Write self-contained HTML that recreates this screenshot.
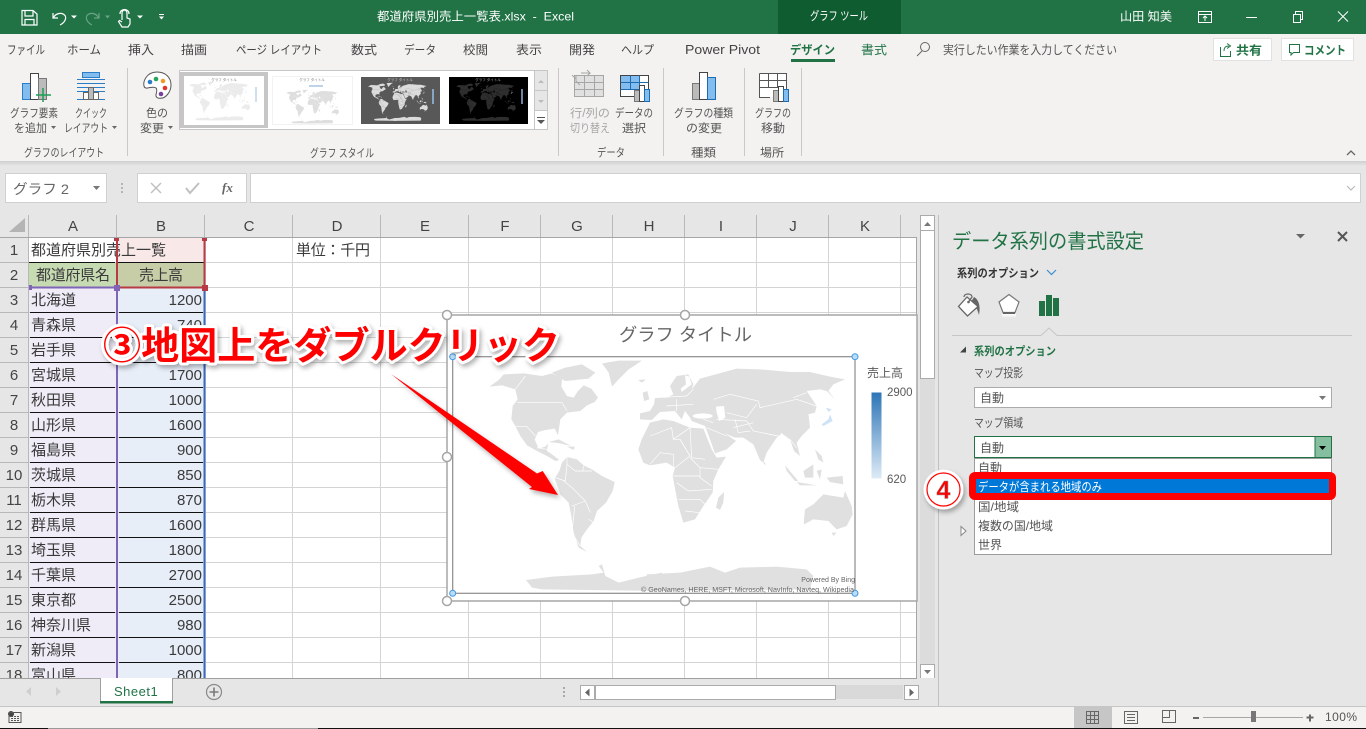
<!DOCTYPE html>
<html lang="ja"><head><meta charset="utf-8"><title>Excel</title>
<style>
html,body{margin:0;padding:0;background:#e6e6e6;width:1366px;height:729px;overflow:hidden}
svg{display:block;position:absolute;left:0;top:0}
text{font-family:"Liberation Sans","Noto Sans CJK JP",sans-serif;white-space:pre}
.u{font-size:12px;fill:#444}
.w{font-size:12px;fill:#fff}
.g{font-size:11.5px;fill:#555}
.c{font-size:15px;fill:#3a3a3a}
.h{font-size:15px;fill:#444;text-anchor:middle}
.p{font-size:12px;fill:#555}
.tt{font-size:3.5px;text-anchor:middle}
.sea{fill:var(--sea,#fff)}
.bl{fill:none;stroke:var(--sea,#fff);stroke-width:2}
</style></head><body>
<svg width="1366" height="729" viewBox="0 0 1366 729" xmlns="http://www.w3.org/2000/svg">
<defs>
<linearGradient id="lg" x1="0" y1="0" x2="0" y2="1"><stop offset="0" stop-color="#2e75b6"/><stop offset="1" stop-color="#deebf7"/></linearGradient>
<linearGradient id="sh" x1="0" y1="0" x2="0" y2="1"><stop offset="0" stop-color="#cfcfcf"/><stop offset="1" stop-color="#e6e6e6"/></linearGradient>
<linearGradient id="pb" x1="0" y1="0" x2="0" y2="1"><stop offset="0" stop-color="#fff"/><stop offset="1" stop-color="#e6e6e6"/></linearGradient>
<filter id="ds" x="-10%" y="-20%" width="125%" height="150%"><feDropShadow dx="2" dy="3" stdDeviation="2.5" flood-color="#000" flood-opacity=".3"/></filter>
<clipPath id="gridclip"><rect x="0" y="215" width="917" height="463"/></clipPath>
<g id="map">
<g transform="translate(36,138)">
<path d="M112,92L140,72L155,55L215,52L270,60L300,52L330,70L328,92L345,120L365,125L378,105L395,88L418,98L438,125L428,138L405,148L385,165L345,170L325,190L318,238L308,218L280,222L258,228L248,250L260,278L280,272L288,262L285,285L300,295L322,312L310,315L285,300L255,285L225,268L205,240L190,210L178,190L182,150L197,130L190,100L150,88Z"/>
<path d="M300,50L340,35L390,25L430,50L410,68L370,72L340,75L320,65Z"/>
<path d="M450,22L500,14L570,14L530,40L500,70L480,92L470,50Z"/>
<path d="M558,72L582,70L570,80Z"/>
<path d="M290,258L320,250L358,270L325,262Z"/>
<path d="M345,272L368,272L365,282Z"/>
<path d="M308,368L322,345L330,320L345,303L375,310L395,328L420,340L450,360L488,378L482,405L462,440L435,465L425,495L405,520L388,545L385,570L405,588L380,575L365,530L358,480L350,440L325,415Z"/>
<path d="M222,672L300,662L420,655L455,650L440,630L450,625L460,660L500,680L560,665L630,650L630,705L270,700L240,695Z"/>
<g class="bl"><path d="M195,140L330,140L345,165"/><path d="M190,212L225,212L250,240"/><path d="M190,100L220,60"/><path d="M255,275L285,280"/><path d="M345,303L345,325L370,345L395,345"/><path d="M335,375L360,395L400,435L415,470"/><path d="M360,450L400,435"/><path d="M310,365L340,375L345,325"/><path d="M395,330L392,345L420,345"/><path d="M368,450L360,530L385,570"/><path d="M410,490L425,500"/></g>
</g>
<g transform="translate(630,138)">
<path d="M-35,280L-25,250L0,200L40,190L70,195L120,215L160,218L185,280L200,305L228,302L205,340L190,375L188,410L160,450L135,490L100,500L85,450L68,360L75,335L50,320L0,328L-20,320Z"/>
<path d="M-30,172L0,165L12,145L15,125L50,125L70,115L60,90L80,60L115,55L130,85L125,100L150,68L260,38L330,40L420,48L480,48L540,62L585,70L550,85L535,105L555,130L530,105L510,100L470,105L500,150L495,170L475,175L478,195L480,215L455,240L440,260L450,300L432,285L420,250L395,232L380,245L350,290L340,320L330,312L310,265L280,245L255,245L225,232L258,255L230,280L195,292L170,222L165,210L125,195L120,185L105,165L95,190L75,165L30,168L5,192L-30,190Z"/>
<ellipse class="sea" cx="158" cy="180" rx="30" ry="8"/>
<path class="sea" d="M198,152L222,150L226,185L208,195L200,170Z"/>
<path class="sea" d="M105,58L118,62L125,85L95,108L92,98L108,85Z"/>
<path d="M-22,110L-8,105L-2,130L-18,135Z"/>
<path d="M198,455L205,425L222,408L220,440L210,462Z"/>
<path d="M462,490L465,460L490,445L520,415L550,420L580,425L585,405L605,450L608,475L590,510L560,520L535,495L490,490L462,505Z"/>
<path d="M545,530L560,530L550,540Z"/>
<path d="M405,328L445,375L435,375L410,345Z"/>
<path d="M440,378L500,388L450,388Z"/>
<path d="M460,345L490,325L490,365L465,365Z"/>
<path d="M500,345L515,340L510,370Z"/>
<path d="M530,365L578,360L580,385L540,378Z"/>
<path d="M495,280L515,300L520,320L505,310Z"/>
<path d="M340,315L348,325L342,325Z"/>
<path d="M-10,655L90,650L180,632L225,650L270,635L380,632L470,640L490,660L480,700L-10,705Z"/>
<path d="M528,155L545,160L535,168Z" style="fill:#cfe2f6"/>
<path d="M540,175L548,195L520,210L515,205L535,190Z" style="fill:#cfe2f6"/>
<g class="bl"><path d="M0,240L65,215L70,250L120,215"/><path d="M70,250L90,250L120,300"/><path d="M120,215L125,305L165,310"/><path d="M0,325L30,290L70,295L70,335"/><path d="M90,250L120,300L75,335"/><path d="M120,305L150,335L205,340"/><path d="M150,335L150,365L185,390"/><path d="M70,360L150,360"/><path d="M80,380L115,405L185,400"/><path d="M85,430L150,430L165,445"/><path d="M105,465L150,470"/><path d="M190,130L240,115L325,135L330,155L440,130L500,150"/><path d="M230,170L290,185L320,145"/><path d="M200,190L290,195L310,225L385,240"/><path d="M255,190L265,230L300,225"/><path d="M250,215L310,200"/><path d="M170,215L230,240"/><path d="M160,190L190,200"/><path d="M15,125L110,120L130,100"/><path d="M50,150L130,145"/><path d="M80,130L80,165"/><path d="M430,125L470,110"/><path d="M420,250L440,275"/><path d="M395,230L410,280"/></g>
</g>
</g>
</defs>

<!-- title bar -->
<rect width="1366" height="34" fill="#217346"/>
<rect x="778" width="123" height="34" fill="#0f5c30"/>
<g fill="none" stroke="#fff" stroke-width="1.2">
<path d="M22,10.500H33L37,14V25H22Z"/><path d="M25,10.500V16H33V10.500M25,25V19.500H34V25"/>
<path d="M53,13V18H58M53.500,17.500C56,13 62,12 65,15.500C67,19 64,23 60,25"/>
</g>
<path d="M71,15.500h6l-3,3z" fill="#fff"/>
<g fill="none" stroke="#6aa386" stroke-width="1.2"><path d="M99,13V18H94M98.500,17.500C96,13 90,12 87,15.500C85,19 88,23 92,25"/></g>
<path d="M105,15.500h5l-2.500,3z" fill="#6aa386"/>
<g fill="none" stroke="#fff" stroke-width="1.2"><path d="M122,20V13.500C122,9 127,9 127,13.500V18L130,19V24L128,27H122L118.500,21.500L119.500,20.500L122,22"/><path d="M120,14C120,8 129,8 129,14"/></g>
<path d="M137,15.500h6l-3,3z" fill="#fff"/>
<path d="M159,14h5v1h-5zM159,16.500h5l-2.500,3z" fill="#fff"/>
<text class="w" x="377" y="20.500" textLength="197" lengthAdjust="spacingAndGlyphs">都道府県別売上一覧表.xlsx  -  Excel</text>
<text class="w" x="810" y="20" textLength="58" lengthAdjust="spacingAndGlyphs">グラフ ツール</text>
<text class="w" x="1120" y="20.500" textLength="52" lengthAdjust="spacingAndGlyphs">山田 知美</text>
<g fill="none" stroke="#fff" stroke-width="1"><path d="M1198.500,11.500H1211.500V22.500H1198.500ZM1198.500,14.500H1211.500M1205,21V16.500M1203,18L1205,16L1207,18"/><path d="M1246,17.500H1257"/><path d="M1293.500,14.500H1300.500V22.500H1293.500ZM1295.500,14.500V11.500H1302.500V19.500H1300.500"/><path d="M1338,11.500L1348,21.500M1348,11.500L1338,21.500"/></g>

<!-- tabs / ribbon -->
<rect y="34" width="1366" height="127" fill="#f3f2f1"/>
<rect y="161" width="1366" height="5" fill="url(#sh)"/>
<text class="u" x="7" y="54" textLength="38" lengthAdjust="spacingAndGlyphs">ファイル</text>
<text class="u" x="67" y="54" textLength="34" lengthAdjust="spacingAndGlyphs">ホーム</text>
<text class="u" x="128" y="54" textLength="26" lengthAdjust="spacingAndGlyphs">挿入</text>
<text class="u" x="181" y="54" textLength="26" lengthAdjust="spacingAndGlyphs">描画</text>
<text class="u" x="236" y="54" textLength="86" lengthAdjust="spacingAndGlyphs">ページ レイアウト</text>
<text class="u" x="351" y="54" textLength="26" lengthAdjust="spacingAndGlyphs">数式</text>
<text class="u" x="404" y="54" textLength="32" lengthAdjust="spacingAndGlyphs">データ</text>
<text class="u" x="463" y="54" textLength="25" lengthAdjust="spacingAndGlyphs">校閲</text>
<text class="u" x="516" y="54" textLength="26" lengthAdjust="spacingAndGlyphs">表示</text>
<text class="u" x="569" y="54" textLength="26" lengthAdjust="spacingAndGlyphs">開発</text>
<text class="u" x="621" y="54" textLength="33" lengthAdjust="spacingAndGlyphs">ヘルプ</text>
<text class="u" x="685" y="54" textLength="75" lengthAdjust="spacingAndGlyphs" style="font-size:13px">Power Pivot</text>
<text class="u" x="790" y="54" textLength="45" lengthAdjust="spacingAndGlyphs" style="fill:#217346;font-weight:700">デザイン</text>
<rect x="791" y="59" width="44" height="3" fill="#217346"/>
<text class="u" x="861" y="54" textLength="26" lengthAdjust="spacingAndGlyphs" style="fill:#217346">書式</text>
<g fill="none" stroke="#666" stroke-width="1"><circle cx="925" cy="47" r="4.500"/><path d="M922,51L917,56"/></g>
<text class="u" x="943" y="54" textLength="174" lengthAdjust="spacingAndGlyphs" style="fill:#555">実行したい作業を入力してください</text>
<rect x="1213.500" y="38.500" width="58" height="22" fill="#fff" stroke="#e1e1e1"/>
<g fill="none" stroke="#217346"><path d="M1220.500,47V56.500H1230.500V51"/><path d="M1224,51C1224,47 1226,46 1229,46M1227,43.500L1230.500,46L1227,48.500"/></g>
<text class="u" x="1236" y="54.500" textLength="26" lengthAdjust="spacingAndGlyphs" style="fill:#217346;font-weight:700">共有</text>
<rect x="1281.500" y="38.500" width="72" height="22" fill="#fff" stroke="#e1e1e1"/>
<path d="M1289.500,44.500H1299.500V52.500H1293.500L1291,55V52.500H1289.500Z" fill="none" stroke="#217346"/>
<text class="u" x="1304" y="54.500" textLength="42" lengthAdjust="spacingAndGlyphs" style="fill:#217346;font-weight:700">コメント</text>

<!-- group separators -->
<g fill="#c8c8c8"><rect x="127" y="68" width="1" height="88"/><rect x="558" y="68" width="1" height="88"/><rect x="663" y="68" width="1" height="88"/><rect x="744" y="68" width="1" height="88"/><rect x="801" y="68" width="1" height="88"/></g>

<!-- chart element icon -->
<rect x="22.500" y="83.500" width="8" height="16" fill="#83bdef" stroke="#2a7dc6"/>
<rect x="30.500" y="73.500" width="8" height="26" fill="#fff" stroke="#444"/>
<rect x="38.500" y="78.500" width="8" height="21" fill="#bbb" stroke="#777"/>
<path d="M43,88V102M36,95H51" stroke="#1e9e55" stroke-width="1.500"/>
<text class="g" x="10" y="117" textLength="48" lengthAdjust="spacingAndGlyphs" >グラフ要素</text>
<text class="g" x="14" y="132" textLength="33" lengthAdjust="spacingAndGlyphs">を追加</text>
<path d="M51,126h5l-2.500,3z" fill="#666"/>
<!-- quick layout -->
<rect x="82.500" y="72.500" width="17" height="5" fill="#83bdef" stroke="#2a7dc6"/>
<path d="M77,79.500H105M77,83.500H105M77,87.500H105M77,99.500H105M77,91.500H105" stroke="#2a7dc6" fill="none"/>
<rect x="88.500" y="87.500" width="5" height="12" fill="#bbb" stroke="#666"/><rect x="83.500" y="92.500" width="5" height="7" fill="#fff" stroke="#666"/><rect x="93.500" y="92.500" width="5" height="7" fill="#fff" stroke="#666"/>
<text class="g" x="75" y="117" textLength="32" lengthAdjust="spacingAndGlyphs">クイック</text>
<text class="g" x="64" y="132" textLength="44" lengthAdjust="spacingAndGlyphs">レイアウト</text>
<path d="M112,126h5l-2.500,3z" fill="#666"/>
<!-- palette -->
<path d="M157,72C146,72 143,82 144,86C145,91 152,85 156,88C159,91 153,96 158,98C166,100 171,91 171,85C171,77 165,72 157,72Z" fill="#fff" stroke="#555"/>
<circle cx="150" cy="82" r="2.300" fill="#2a7dc6"/><circle cx="156" cy="79" r="2.300" fill="#2aa35a"/><circle cx="163" cy="81" r="2.300" fill="#f09a2c"/><circle cx="165" cy="88" r="2.300" fill="#e0362c"/><circle cx="161" cy="94" r="2.300" fill="#7a3fa0"/>
<text class="g" x="146" y="117" textLength="22" lengthAdjust="spacingAndGlyphs">色の</text>
<text class="g" x="140" y="132" textLength="24" lengthAdjust="spacingAndGlyphs">変更</text>
<path d="M168,126h5l-2.500,3z" fill="#666"/>
<text class="g" x="24" y="156.500" textLength="80" lengthAdjust="spacingAndGlyphs">グラフのレイアウト</text>
<text class="g" x="310" y="157" textLength="64" lengthAdjust="spacingAndGlyphs">グラフ スタイル</text>

<!-- gallery -->
<rect x="179.500" y="70.500" width="368" height="59" fill="#fff" stroke="#c6c6c6"/>
<rect x="180" y="72" width="88" height="56" fill="#c6c6c6"/>
<rect x="184" y="76" width="80" height="49" fill="#fff"/>
<g transform="translate(180.600,73.300) scale(.056)" fill="#ebebeb"><use href="#map"/></g>
<text class="tt" x="224" y="81" fill="#777">グラフ タイトル</text>
<rect x="255" y="87" width="2" height="15" fill="#cfe0f0"/>
<rect x="272.500" y="76.500" width="80" height="48" fill="#fff" stroke="#f2f2f2"/>
<g transform="translate(278.700,82.500) scale(.0486)" fill="#dedede"><use href="#map"/></g>
<text class="tt" x="312" y="81" fill="#777">グラフ タイトル</text>
<rect x="309" y="85" width="14" height="2" fill="#bcd3ea"/>
<rect x="361" y="77" width="79" height="47" fill="#585858"/>
<g transform="translate(359.700,74.500) scale(.055)" fill="#dcdcdc" style="--sea:#585858"><use href="#map"/></g>
<text class="tt" x="400" y="81" fill="#ccc">グラフ タイトル</text>
<rect x="432" y="89" width="2" height="15" fill="#88a5c4"/>
<rect x="449" y="77" width="79" height="47" fill="#000"/>
<g transform="translate(447.700,74.500) scale(.055)" fill="#2e2e2e" style="--sea:#000"><use href="#map"/></g>
<text class="tt" x="488" y="81" fill="#aaa">グラフ タイトル</text>
<rect x="521" y="89" width="2" height="15" fill="#6c86a2"/>
<g fill="#e6e6e6" stroke="#c6c6c6"><rect x="534.500" y="70.500" width="13" height="20"/><rect x="534.500" y="90.500" width="13" height="20"/></g>
<rect x="534.500" y="110.500" width="13" height="19" fill="#fff" stroke="#c6c6c6"/>
<path d="M538,83l3-3 3,3zM538,100l3,3 3-3z" fill="#bbb"/>
<path d="M537,117h8v1h-8zM537,120h8l-4,4z" fill="#555"/>

<!-- data group icons -->
<g fill="#c8c8c8" stroke="#a6a6a6"><rect x="574.500" y="75.500" width="29" height="21" fill="#e0e0e0"/><path d="M574.500,89.500H603.500M584.500,75.500V96.500M594.500,75.500V96.500M574.500,82.500H603.500" fill="none"/></g>
<path d="M576,76V81L580,85M576,79L572,75M581,73H590L587,70M590,73L587,76" fill="none" stroke="#a6a6a6"/>
<text class="g" x="570" y="117" textLength="40" lengthAdjust="spacingAndGlyphs" style="fill:#a6a6a6">行/列の</text>
<text class="g" x="570" y="132" textLength="40" lengthAdjust="spacingAndGlyphs" style="fill:#a6a6a6">切り替え</text>
<rect x="620.500" y="75.500" width="28" height="21" fill="#fff" stroke="#444"/>
<rect x="621" y="76" width="18" height="13" fill="#83bdef"/>
<path d="M620.500,82.500H648.500M620.500,89.500H640M630.500,75.500V89M639.500,75.500V89" stroke="#1e6cb0" fill="none"/>
<rect x="634.500" y="90.500" width="5" height="11" fill="#bbb" stroke="#777"/><rect x="639.500" y="85.500" width="5" height="16" fill="#fff" stroke="#444"/><rect x="644.500" y="89.500" width="5" height="12" fill="#83bdef" stroke="#1e6cb0"/>
<text class="g" x="615" y="117" textLength="38" lengthAdjust="spacingAndGlyphs">データの</text>
<text class="g" x="622" y="132" textLength="24" lengthAdjust="spacingAndGlyphs">選択</text>
<text class="g" x="597" y="156.500" textLength="28" lengthAdjust="spacingAndGlyphs">データ</text>
<!-- chart type -->
<rect x="692.500" y="83.500" width="7" height="16" fill="#bbb" stroke="#777"/><rect x="699.500" y="72.500" width="8" height="27" fill="#fff" stroke="#444"/><rect x="707.500" y="77.500" width="8" height="22" fill="#83bdef" stroke="#1e6cb0"/>
<text class="g" x="674" y="117" textLength="59" lengthAdjust="spacingAndGlyphs">グラフの種類</text>
<text class="g" x="686" y="132" textLength="36" lengthAdjust="spacingAndGlyphs">の変更</text>
<text class="g" x="691" y="156.500" textLength="25" lengthAdjust="spacingAndGlyphs">種類</text>
<!-- move chart -->
<rect x="760" y="74" width="26" height="23" fill="#fff"/>
<path d="M759.500,73.500H786.500V90M759.500,73.500V97.500H770M759.500,80.500H786.500M759.500,87.500H780M768.500,73.500V88M777.500,73.500V88" fill="none" stroke="#555"/>
<rect x="773.500" y="90.500" width="5" height="11" fill="#bbb" stroke="#777"/><rect x="778.500" y="86.500" width="5" height="15" fill="#fff" stroke="#444"/><rect x="783.500" y="89.500" width="5" height="12" fill="#83bdef" stroke="#1e6cb0"/>
<text class="g" x="755" y="117" textLength="36" lengthAdjust="spacingAndGlyphs">グラフの</text>
<text class="g" x="761" y="132" textLength="24" lengthAdjust="spacingAndGlyphs">移動</text>
<text class="g" x="760" y="156.500" textLength="24" lengthAdjust="spacingAndGlyphs">場所</text>
<path d="M1347,155l4-4 4,4" fill="none" stroke="#666" stroke-width="1.300"/>

<!-- formula bar -->
<rect x="5.500" y="173.500" width="101" height="29" fill="#fff" stroke="#d0d0d0"/>
<text x="13" y="194" style="font-size:14px;fill:#666" textLength="56" lengthAdjust="spacingAndGlyphs">グラフ 2</text>
<path d="M93,186h7l-3.500,4z" fill="#777"/>
<g fill="#b5b5b5"><rect x="121" y="183" width="2" height="2"/><rect x="121" y="187" width="2" height="2"/><rect x="121" y="191" width="2" height="2"/></g>
<rect x="137.500" y="173.500" width="109" height="29" fill="#fff" stroke="#d0d0d0"/>
<path d="M151,183L161,193M161,183L151,193" stroke="#c0c0c0" stroke-width="1.500" fill="none"/>
<path d="M186,188L190,193L199,183" stroke="#c0c0c0" stroke-width="2" fill="none"/>
<text x="222" y="192" style="font-size:13px;fill:#666;font-style:italic;font-weight:700;font-family:'Liberation Serif',serif">fx</text>
<rect x="250.500" y="173.500" width="1110" height="29" fill="#fff" stroke="#d0d0d0"/>
<path d="M1347,186l4,4 4-4" fill="none" stroke="#bbb" stroke-width="1.200"/>

<!-- grid -->
<g clip-path="url(#gridclip)">
<rect x="0" y="215" width="917" height="22" fill="#e6e6e6"/>
<rect x="0" y="237" width="29" height="441" fill="#e6e6e6"/>
<rect x="29" y="237" width="888" height="441" fill="#fff"/>
<path d="M25,232V218L9,232Z" fill="#b4b4b4"/>
<!-- cell fills -->
<rect x="118" y="238" width="86" height="24" fill="#f8e9e8"/>
<rect x="29" y="263" width="87" height="24" fill="#c7dbb3"/>
<rect x="118" y="263" width="86" height="24" fill="#c6cda7"/>
<rect x="29" y="288" width="87" height="390" fill="#efecf7"/>
<rect x="118" y="288" width="86" height="390" fill="#e7eef8"/>
<!-- grid lines -->
<g stroke="#d4d4d4" fill="none">
<path d="M205.500,237V678M292.500,237V678M380.500,237V678M468.500,237V678M540.500,237V678M612.500,237V678M684.500,237V678M756.500,237V678M828.500,237V678M900.500,237V678"/>
<path d="M29,262.500H917M29,287.500H917M29,312.500H917M29,337.500H917M29,362.500H917M29,387.500H917M29,412.500H917M29,437.500H917M29,462.500H917M29,487.500H917M29,512.500H917M29,537.500H917M29,562.500H917M29,587.500H917M29,612.500H917M29,637.500H917M29,662.500H917"/>
</g>
<!-- black cell borders -->
<g stroke="#111" fill="none">
<path d="M29,262.500H115M118,262.500H204"/>
<path d="M30,312.500H115M119,312.500H203M30,337.500H115M119,337.500H203M30,362.500H115M119,362.500H203M30,387.500H115M119,387.500H203M30,412.500H115M119,412.500H203M30,437.500H115M119,437.500H203M30,462.500H115M119,462.500H203M30,487.500H115M119,487.500H203M30,512.500H115M119,512.500H203M30,537.500H115M119,537.500H203M30,562.500H115M119,562.500H203M30,587.500H115M119,587.500H203M30,612.500H115M119,612.500H203M30,637.500H115M119,637.500H203M30,662.500H115M119,662.500H203"/>
</g>
<!-- headers -->
<g stroke="#b8b8b8" fill="none">
<path d="M28.500,215V237M116.500,215V237M204.500,215V237M292.500,215V237M380.500,215V237M468.500,215V237M540.500,215V237M612.500,215V237M684.500,215V237M756.500,215V237M828.500,215V237M900.500,215V237"/>
<path d="M0,262.500H29M0,287.500H29M0,312.500H29M0,337.500H29M0,362.500H29M0,387.500H29M0,412.500H29M0,437.500H29M0,462.500H29M0,487.500H29M0,512.500H29M0,537.500H29M0,562.500H29M0,587.500H29M0,612.500H29M0,637.500H29M0,662.500H29"/>
<path d="M28.500,237V678"/>
</g>
<path d="M0,237.500H917M916.500,237V678" stroke="#a6a6a6" fill="none"/>
<text class="h" x="73" y="231">A</text><text class="h" x="161" y="231">B</text><text class="h" x="249" y="231">C</text><text class="h" x="337" y="231">D</text><text class="h" x="425" y="231">E</text><text class="h" x="505" y="231">F</text><text class="h" x="577" y="231">G</text><text class="h" x="649" y="231">H</text><text class="h" x="721" y="231">I</text><text class="h" x="793" y="231">J</text><text class="h" x="865" y="231">K</text>
<text class="h" x="14" y="255">1</text><text class="h" x="14" y="280">2</text><text class="h" x="14" y="305">3</text><text class="h" x="14" y="330">4</text><text class="h" x="14" y="355">5</text><text class="h" x="14" y="380">6</text><text class="h" x="14" y="405">7</text><text class="h" x="14" y="430">8</text><text class="h" x="14" y="455">9</text><text class="h" x="14" y="480">10</text><text class="h" x="14" y="505">11</text><text class="h" x="14" y="530">12</text><text class="h" x="14" y="555">13</text><text class="h" x="14" y="580">14</text><text class="h" x="14" y="605">15</text><text class="h" x="14" y="630">16</text><text class="h" x="14" y="655">17</text><text class="h" x="14" y="680">18</text>
<!-- cells -->
<text class="c" x="31" y="255" textLength="135">都道府県別売上一覧</text>
<text class="c" x="296" y="255" textLength="74">単位：千円</text>
<text class="c" x="36" y="280" textLength="74">都道府県名</text>
<text class="c" x="139" y="280" textLength="44">売上高</text>
<text class="c" x="31" y="305">北海道</text><text class="c" x="31" y="330">青森県</text><text class="c" x="31" y="355">岩手県</text><text class="c" x="31" y="380">宮城県</text><text class="c" x="31" y="405">秋田県</text><text class="c" x="31" y="430">山形県</text><text class="c" x="31" y="455">福島県</text><text class="c" x="31" y="480">茨城県</text><text class="c" x="31" y="505">栃木県</text><text class="c" x="31" y="530">群馬県</text><text class="c" x="31" y="555">埼玉県</text><text class="c" x="31" y="580">千葉県</text><text class="c" x="31" y="605">東京都</text><text class="c" x="31" y="630">神奈川県</text><text class="c" x="31" y="655">新潟県</text><text class="c" x="31" y="680">富山県</text>
<g text-anchor="end"><text class="c" x="202" y="305">1200</text><text class="c" x="202" y="330">740</text><text class="c" x="202" y="380">1700</text><text class="c" x="202" y="405">1000</text><text class="c" x="202" y="430">1600</text><text class="c" x="202" y="455">900</text><text class="c" x="202" y="480">850</text><text class="c" x="202" y="505">870</text><text class="c" x="202" y="530">1600</text><text class="c" x="202" y="555">1800</text><text class="c" x="202" y="580">2700</text><text class="c" x="202" y="605">2500</text><text class="c" x="202" y="630">980</text><text class="c" x="202" y="655">1000</text><text class="c" x="202" y="680">800</text></g>
<!-- selection colored ranges -->
<rect x="116" y="288" width="2" height="390" fill="#8064b8"/>
<rect x="203.500" y="288" width="2" height="390" fill="#3a6ac0"/>
<rect x="30" y="286.500" width="86" height="2" fill="#8064b8"/>
<rect x="118" y="286.500" width="86" height="2" fill="#b83a44"/>
<rect x="116" y="238" width="2" height="48" fill="#b83a44"/>
<rect x="203.500" y="238" width="2" height="48" fill="#b83a44"/>
<rect x="29" y="285" width="3" height="5" fill="#8064b8"/>
<rect x="114" y="285" width="6" height="6" fill="#8064b8"/>
<rect x="202" y="285" width="6" height="6" fill="#b83a44"/>
<rect x="114" y="238" width="5" height="3" fill="#b83a44"/>
<rect x="202" y="238" width="5" height="3" fill="#b83a44"/>
</g>

<!-- chart -->
<rect x="447" y="315" width="470" height="286" fill="#fff" stroke="#a6a6a6" stroke-width="1.500"/>
<text x="619" y="341" style="font-size:18px;fill:#666" textLength="133" lengthAdjust="spacingAndGlyphs">グラフ タイトル</text>
<svg x="440" y="310" width="480" height="300" viewBox="0 0 1440 900"><g fill="#e0e0e0"><use href="#map"/></g></svg>
<rect x="452.700" y="356.700" width="402.300" height="236.600" fill="none" stroke="#8c8c8c" stroke-width="1.200"/>
<g fill="#bcdcf5" stroke="#3c96e6"><circle cx="452.700" cy="356.700" r="3"/><circle cx="855" cy="356.700" r="3"/><circle cx="452.700" cy="593.300" r="3"/><circle cx="855" cy="593.300" r="3"/></g>
<g fill="#fff" stroke="#a6a6a6" stroke-width="1.500"><circle cx="447" cy="315" r="4.500"/><circle cx="685" cy="315" r="4.500"/><circle cx="447" cy="457" r="4.500"/><circle cx="447" cy="601" r="4.500"/><circle cx="685" cy="601" r="4.500"/></g>
<text x="867" y="377" style="font-size:12px;fill:#595959" textLength="36" lengthAdjust="spacingAndGlyphs">売上高</text>
<rect x="871.500" y="392.500" width="10" height="86" fill="url(#lg)"/>
<text x="887" y="396" style="font-size:11.500px;fill:#595959">2900</text>
<text x="887" y="483" style="font-size:11.500px;fill:#595959">620</text>
<text x="855" y="582" text-anchor="end" style="font-size:7px;fill:#666">Powered By Bing</text>
<text x="641" y="592" style="font-size:7px;fill:#666" textLength="213" lengthAdjust="spacingAndGlyphs">© GeoNames, HERE, MSFT, Microsoft, NavInfo, Navteq, Wikipedia</text>

<!-- right scrollbar -->
<rect x="920.500" y="215.500" width="14" height="15" fill="#fff" stroke="#ababab"/>
<path d="M924,226l3.500-4 3.500,4z" fill="#777"/>
<rect x="920.500" y="230.500" width="14" height="148" fill="#fff" stroke="#ababab"/>
<rect x="920" y="379" width="15" height="286" fill="#dcdcdc"/>
<rect x="920.500" y="664.500" width="14" height="14" fill="#fff" stroke="#ababab"/>
<path d="M924,670l3.500,4 3.500-4z" fill="#777"/>
<rect x="938" y="215" width="1" height="491" fill="#c0c0c0"/>

<!-- pane -->
<text x="952" y="248" style="font-size:20px;fill:#217346" textLength="192" lengthAdjust="spacingAndGlyphs">データ系列の書式設定</text>
<path d="M1296,234h9l-4.500,4.500z" fill="#666"/>
<path d="M1338,232L1347,241M1347,232L1338,241" stroke="#555" stroke-width="2" fill="none"/>
<text x="957" y="277" style="font-size:11.500px;font-weight:700;fill:#333" textLength="82" lengthAdjust="spacingAndGlyphs">系列のオプション</text>
<path d="M1047,270l4.500,4.500 4.500-4.500" fill="none" stroke="#3c8dcc" stroke-width="1.200"/>
<!-- fill icon -->
<path d="M974,297C978,299 981,305 979,315C977,308 975,305 971,302Z" fill="#666"/>
<path d="M967,297L958.500,306.500L967.500,316L978,306.500Z" fill="#fff" stroke="#666" stroke-width="1.300"/>
<path d="M964,297C964,293 972,293 972,297L968.500,302" fill="none" stroke="#666" stroke-width="1.200"/>
<circle cx="968.500" cy="302" r="1.300" fill="#666"/>
<!-- pentagon icon -->
<path d="M1009,294.500L1019,302L1015,312.500H1003L999,302Z" fill="#fff" stroke="#777" stroke-width="1.200"/>
<rect x="1003" y="312" width="12" height="2" fill="#666"/>
<rect x="1002" y="314" width="14" height="4" fill="url(#pb)"/>
<rect x="1039" y="301" width="6" height="15" fill="#217346"/><rect x="1046" y="295" width="6" height="21" fill="#217346"/><rect x="1053" y="298" width="6" height="18" fill="#217346"/>
<path d="M952,335.500H1041L1049,328L1057,335.500H1352" fill="none" stroke="#c6c6c6"/>
<path d="M960,352.500L966,346.500V352.500Z" fill="#444"/>
<text x="974" y="355" style="font-size:11.500px;font-weight:700;fill:#217346" textLength="82" lengthAdjust="spacingAndGlyphs">系列のオプション</text>
<text class="p" x="974" y="377" textLength="49" lengthAdjust="spacingAndGlyphs">マップ投影</text>
<rect x="974.500" y="387.500" width="357" height="20" fill="#fff" stroke="#ababab"/>
<text class="p" x="980" y="402" textLength="24" lengthAdjust="spacingAndGlyphs">自動</text>
<path d="M1319,396h7l-3.500,4z" fill="#777"/>
<text class="p" x="974" y="427" textLength="49" lengthAdjust="spacingAndGlyphs">マップ領域</text>
<rect x="974.500" y="436.500" width="357" height="21" fill="#fff" stroke="#217346"/>
<rect x="1315" y="437" width="16" height="20" fill="#86bf9f"/>
<path d="M1315,436.500V457" stroke="#217346"/>
<path d="M1319,446h7l-3.500,4z" fill="#000"/>
<text class="p" x="980" y="452" textLength="24" lengthAdjust="spacingAndGlyphs">自動</text>
<rect x="974.500" y="458.500" width="357" height="96" fill="#fff" stroke="#9c9c9c"/>
<text class="p" x="978" y="472" textLength="24" lengthAdjust="spacingAndGlyphs">自動</text>
<text class="p" x="978" y="511" textLength="41" lengthAdjust="spacingAndGlyphs">国/地域</text>
<text class="p" x="978" y="530" textLength="75" lengthAdjust="spacingAndGlyphs">複数の国/地域</text>
<text class="p" x="978" y="549" textLength="24" lengthAdjust="spacingAndGlyphs">世界</text>
<path d="M961,526.500L966,531L961,535.500Z" fill="#fff" stroke="#888"/>
<rect x="969" y="472" width="367" height="28" rx="6" fill="#f00"/>
<rect x="976" y="479" width="353" height="14" fill="#0078d7"/>
<text class="w" x="978" y="491" textLength="124" lengthAdjust="spacingAndGlyphs">データが含まれる地域のみ</text>
<!-- circled 4 -->
<circle cx="943.500" cy="489.500" r="20" fill="#fff" filter="url(#ds)"/>
<circle cx="943.500" cy="489.500" r="16.500" fill="#fff" stroke="#f00" stroke-width="1.200"/>
<text x="943.500" y="498.500" text-anchor="middle" style="font-size:25px;font-weight:700;fill:#f00;stroke:#999;stroke-width:.5px">4</text>

<!-- sheet tab bar -->
<rect x="0" y="678" width="938" height="28" fill="#e6e6e6"/>
<rect x="0" y="678" width="917" height="1" fill="#a0a0a0"/>
<path d="M31,687L26,691.500L31,696Z M56,687L61,691.500L56,696Z" fill="#cfcfcf"/>
<rect x="100" y="678" width="73" height="24" fill="#fff"/>
<path d="M100.500,678V702M172.500,678V702" stroke="#a0a0a0"/>
<rect x="100" y="701" width="73" height="2.500" fill="#217346"/>
<text x="114" y="696" style="font-size:13px;fill:#217346;letter-spacing:.3px" textLength="44">Sheet1</text>
<circle cx="214" cy="692" r="7.500" fill="none" stroke="#8a8a8a" stroke-width="1.200"/>
<path d="M214,687.500V696.500M209.500,692H218.500" stroke="#7a7a7a" stroke-width="1.600"/>
<g fill="#aaa"><rect x="563" y="687" width="2" height="2"/><rect x="563" y="691" width="2" height="2"/><rect x="563" y="695" width="2" height="2"/></g>
<rect x="595" y="685" width="308" height="14" fill="#d9d9d9"/>
<rect x="580.500" y="685.500" width="14" height="14" fill="#fff" stroke="#ababab"/>
<path d="M589.500,688.500L585,692.500L589.500,696.500Z" fill="#666"/>
<rect x="595.500" y="685.500" width="240" height="14" fill="#fff" stroke="#ababab"/>
<rect x="904.500" y="685.500" width="14" height="14" fill="#fff" stroke="#ababab"/>
<path d="M909.500,688.500L914,692.500L909.500,696.500Z" fill="#666"/>

<!-- status bar -->
<rect x="0" y="706" width="1366" height="23" fill="#f3f2f1"/>
<rect x="0" y="706" width="1366" height="1" fill="#c6c6c6"/>
<rect x="0" y="728" width="1366" height="1" fill="#111"/>
<rect x="48" y="728" width="270" height="1" fill="#9a9a9a"/>
<circle cx="11" cy="714" r="3" fill="#444"/>
<path d="M9,712.500H21V722.500H9Z" fill="none" stroke="#555"/><path d="M11,716.500H20M11,718.500H20M11,720.500H20" stroke="#555" stroke-dasharray="2 1"/>
<rect x="1074" y="707" width="38" height="21" fill="#c6c6c6"/>
<path d="M1086.500,711.500H1098.500V723.500H1086.500ZM1086.500,715.500H1098.500M1086.500,719.500H1098.500M1090.500,711.500V723.500M1094.500,711.500V723.500" fill="none" stroke="#666"/>
<rect x="1124.500" y="711.500" width="13" height="12" fill="none" stroke="#666"/>
<path d="M1127,714.500H1135M1127,717.500H1135M1127,720.500H1135" stroke="#666"/>
<path d="M1162.500,710.500H1175.500V722.500H1162.500ZM1162.500,717.500H1169.500V710.500" fill="none" stroke="#666"/>
<rect x="1193" y="717" width="6" height="2" fill="#666"/>
<rect x="1203" y="717" width="100" height="1" fill="#a6a6a6"/>
<rect x="1251" y="711" width="5" height="11" fill="#777"/>
<path d="M1310,714.500V721.500M1306.500,717.500H1313.500" stroke="#666" stroke-width="2"/>
<text x="1325" y="721" style="font-size:12px;fill:#555" textLength="32">100%</text>

<!-- annotation arrow -->
<path d="M391,374L537,473.500L542.700,471L558,495L529,489L532,487Z" fill="#f00" filter="url(#ds)"/>
<text x="103" y="359" textLength="457" lengthAdjust="spacingAndGlyphs" filter="url(#ds)" style="font-size:38px;font-weight:700;fill:#f00;stroke:#fff;stroke-width:6px;paint-order:stroke;stroke-linejoin:round">③地図上をダブルクリック</text>
</svg>
</body></html>
